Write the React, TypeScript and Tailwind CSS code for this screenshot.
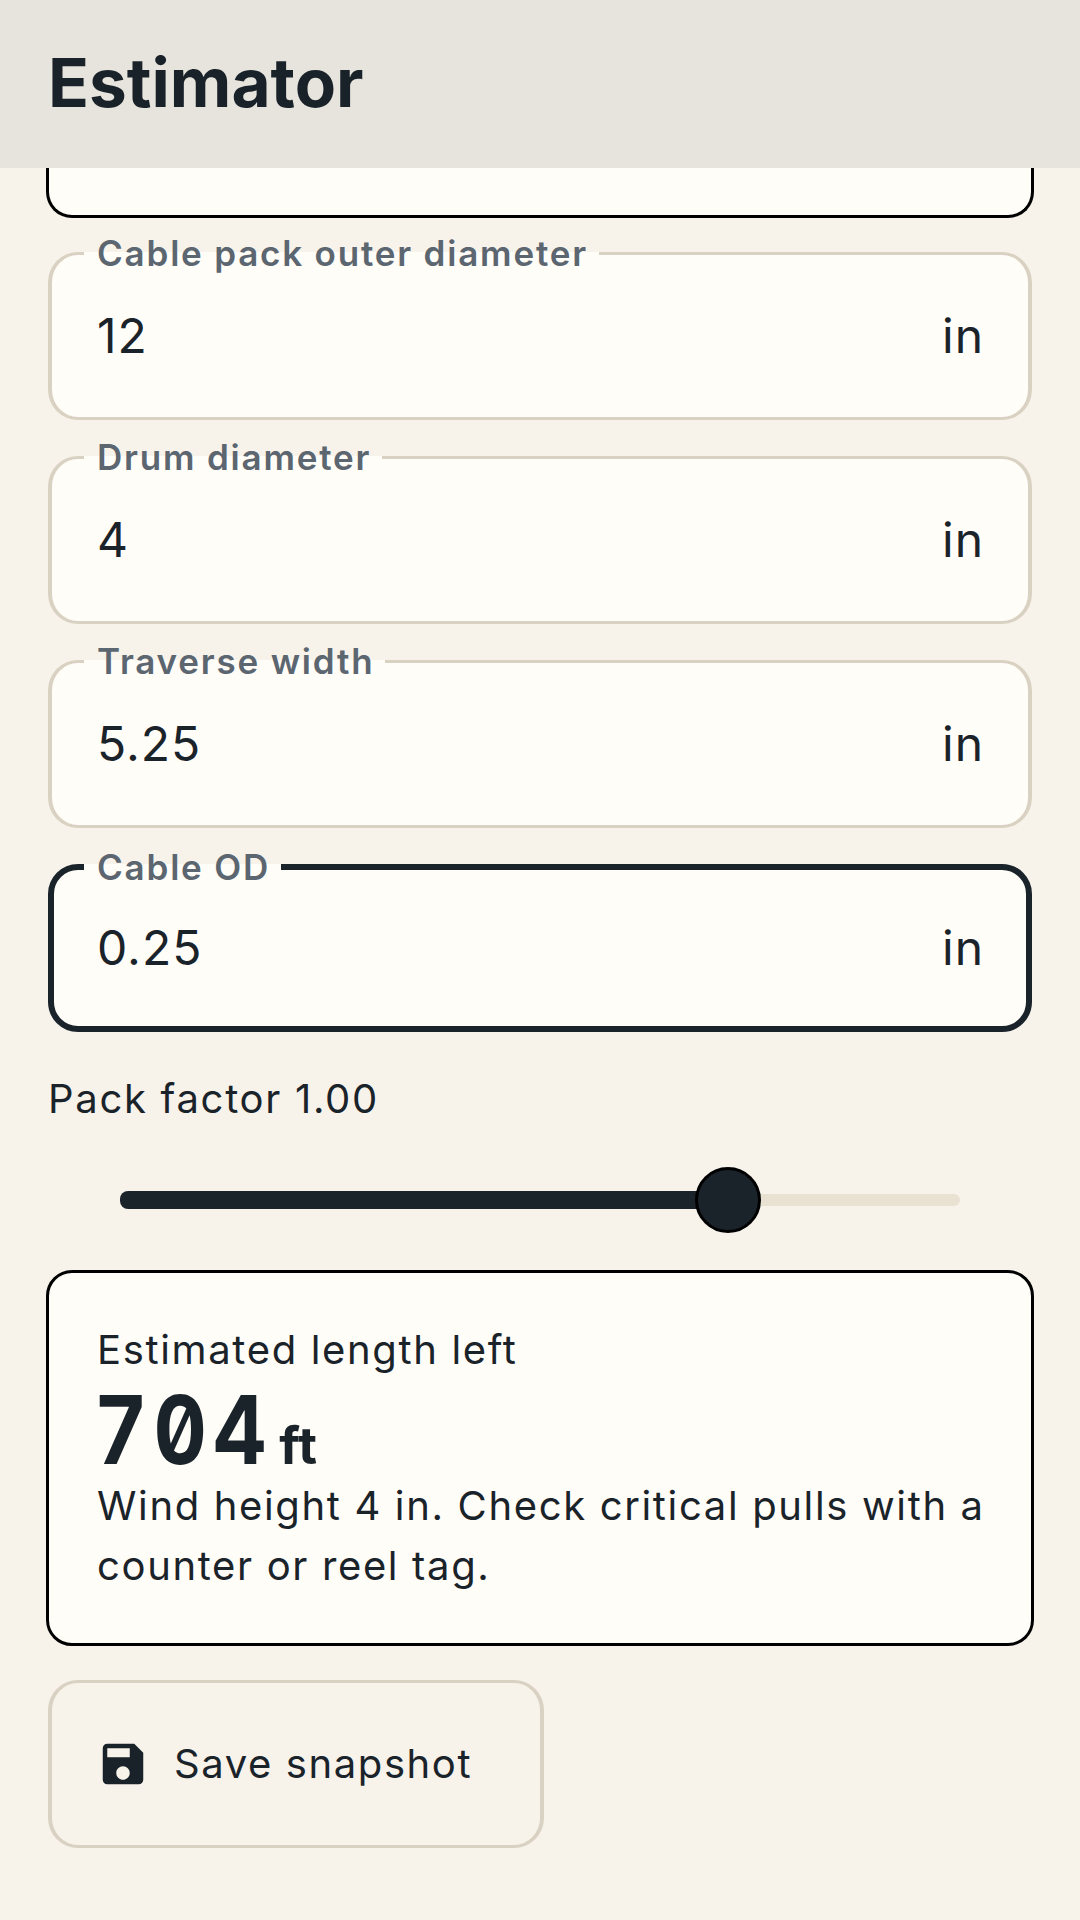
function Field({ label, value, active }: { label: string; value: string; active?: boolean }) {
  return (
    <fieldset
      className={
        active
          ? "h-[186px] rounded-[30px] border-[6px] border-[#1b232a] bg-[#fffdf8] min-w-0"
          : "mb-[18px] h-[186px] rounded-[30px] border-x-[4px] border-y-[3px] border-[#d9d2c3] bg-[#fffdf8] min-w-0"
      }
    >
      <legend
        className={
          active
            ? "ml-[30px] pl-[13px] pr-[11px] text-[35px] leading-[42px] font-semibold tracking-[1.8px] text-[#5c6670]"
            : "ml-[32px] pl-[13px] pr-[11px] text-[35px] leading-[39px] font-semibold tracking-[1.8px] text-[#5c6670]"
        }
      >
        {label}
      </legend>
      <div
        className={
          active
            ? "flex items-center justify-between h-[138px] pb-[18px] pl-[43px] pr-[42px] text-[48px] text-[#1b232a] tracking-[1px]"
            : "flex items-center justify-between h-[144px] pb-[18px] pl-[45px] pr-[44px] text-[48px] text-[#1b232a] tracking-[1px]"
        }
      >
        <span>{value}</span>
        <span>in</span>
      </div>
    </fieldset>
  )
}

export default function App() {
  return (
    <div className="min-h-[1920px] bg-[#f7f3eb] font-['Inter',sans-serif] text-[#1b232a] overflow-hidden">
      <header className="h-[168px] bg-[#e6e4dc] flex items-center px-[48px]">
        <h1 className="-mt-[2px] text-[67.5px] font-bold text-[#1a2229] leading-none">Estimator</h1>
      </header>

      <main className="px-[48px]">
        <div className="-mx-[2px] h-[50px] bg-[#fffdf8] border-[3px] border-t-0 border-black rounded-b-[26px]" />

        <div className="mt-[16px]">
          <Field label="Cable pack outer diameter" value="12" />
          <Field label="Drum diameter" value="4" />
          <Field label="Traverse width" value="5.25" />
          <Field label="Cable OD" value="0.25" active />
        </div>

        <p className="mt-[37px] text-[40px] leading-[60px] tracking-[1.7px]">Pack factor 1.00</p>

        <div className="mt-[38px] mx-[72px] flex items-center h-[66px]">
          <div className="w-[579px] h-[18px] bg-[#1b232a] rounded-l-[8px]" />
          <div className="-ml-[4px] w-[66px] h-[66px] rounded-full bg-[#1b232a] border-[3px] border-black shrink-0" />
          <div className="flex-1 h-[12px] bg-[#e9e2d3] rounded-r-[6px]" />
        </div>

        <section className="mt-[37px] -mx-[2px] h-[376px] bg-[#fffdf8] border-[3px] border-black rounded-[26px] pt-[47px] pl-[48px] pr-[40px]">
          <p className="text-[40px] leading-[60px] tracking-[1.65px]">Estimated length left</p>
          <div className="flex items-baseline h-[96px] pt-[4px] leading-[92px]">
            <span className="-ml-[3px] inline-block origin-left scale-x-[0.87] text-[95px] font-bold tracking-[7px] [font-feature-settings:'zero','tnum']">704</span>
            <span className="-ml-[20px] text-[52px] font-bold">ft</span>
          </div>
          <p className="text-[40px] leading-[60px] tracking-[1.65px]">
            Wind height 4 in. Check critical pulls with a counter or reel tag.
          </p>
        </section>

        <button className="mt-[34px] w-[496px] h-[168px] rounded-[30px] border-x-[4px] border-y-[3px] border-[#d9d2c3] flex items-center pl-[44px] gap-[24px] text-[40px] tracking-[1.6px]">
          <svg viewBox="0 0 24 24" className="w-[54px] h-[54px] shrink-0" fill="#1a2229">
            <path d="M17 3H5c-1.11 0-2 .9-2 2v14c0 1.1.89 2 2 2h14c1.1 0 2-.9 2-2V7l-4-4zm-5 16c-1.66 0-3-1.34-3-3s1.34-3 3-3 3 1.34 3 3-1.34 3-3 3zm3-10H5V5h10v4z" />
          </svg>
          Save snapshot
        </button>
      </main>
    </div>
  )
}
